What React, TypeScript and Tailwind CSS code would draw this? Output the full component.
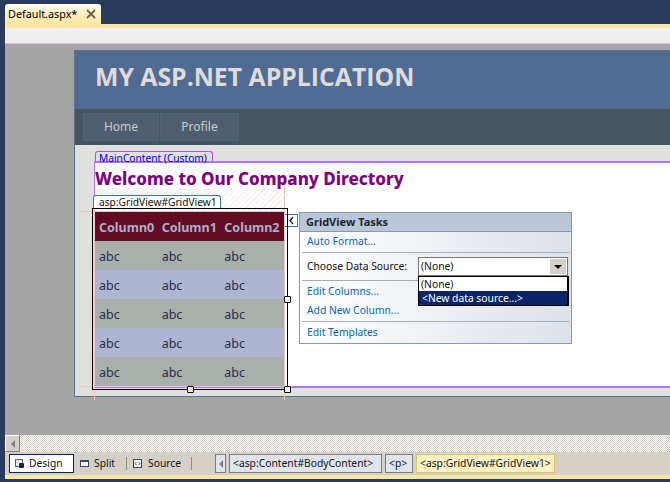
import React from "react";

const rows = [0, 1, 2, 3, 4];
const ui = "font-['Noto_Sans','DejaVu_Sans',sans-serif]";

function Handle({ cls }: { cls: string }) {
  return <div className={`absolute w-[7px] h-[7px] bg-white border border-black rounded-[1px] ${cls}`} />;
}

function GridTable() {
  return (
    <div className="w-[189px] font-['Noto_Sans',sans-serif]">
      <div className="h-[29px] bg-[#620c24] text-[#adaecb] text-[12.5px] font-bold flex items-center pl-[4px] pt-[3px]">
        <span className="w-[63px]">Column0</span>
        <span className="w-[63px]">Column1</span>
        <span className="w-[60px]">Column2</span>
      </div>
      {rows.map((r) => (
        <div
          key={r}
          className={`h-[29px] flex items-center pl-[4px] pt-[4px] text-[12.5px] text-[#2b2c4c] ${r % 2 === 0 ? "bg-[#a9b0ac]" : "bg-[#adb5d0]"}`}
        >
          <span className="w-[63px]">abc</span>
          <span className="w-[63px]">abc</span>
          <span className="w-[60px]">abc</span>
        </div>
      ))}
    </div>
  );
}

function TasksPanel() {
  return (
    <div className="absolute left-[204px] top-0 w-[273px] h-[132px] border border-[#8c97a8] bg-gradient-to-r from-[#ffffff] to-[#dde1e9] text-[10.3px] font-['Noto_Sans',sans-serif]">
      <div className="h-[19px] bg-[#b9c7d9] border-b border-[#8c97a8] pl-[6px] font-bold text-[#1c2433] text-[11px] flex items-center">
        GridView Tasks
      </div>
      <div className="mx-[2px] px-[5px] h-[21px] flex items-center text-[#0066cc] border-b border-[#a5acb8]">Auto Format...</div>
      <div className="mx-[2px] pl-[5px] h-[28px] flex items-center text-[#111] border-b border-[#a5acb8]">
        <span className="w-[111px] shrink-0">Choose Data Source:</span>
        <div className="w-[150px] shrink-0 h-[19px] bg-white border border-[#777] flex items-center justify-between pl-[2px] pr-[1px] text-[#111]">
          <span>(None)</span>
          <div className="w-[16px] h-[15px] bg-[#d4d0c8] flex items-center justify-center">
            <div className="w-0 h-0 border-x-[4px] border-x-transparent border-t-[4px] border-t-black" />
          </div>
        </div>
      </div>
      <div className="mx-[2px] px-[5px] h-[20px] pt-[2px] flex items-center text-[#0066cc]">Edit Columns...</div>
      <div className="mx-[2px] px-[5px] h-[21px] flex items-center text-[#0066cc] border-b border-[#a5acb8]">Add New Column...</div>
      <div className="mx-[2px] px-[5px] h-[21px] flex items-center text-[#0066cc]">Edit Templates</div>
      <div className="absolute left-[118px] top-[63px] w-[151px] h-[30px] bg-white border border-black border-r-2 border-b-2 leading-[13px] text-[#111]">
        <div className="h-[14px] pl-[2px] pt-[1px] flex items-center">(None)</div>
        <div className="h-[14px] pl-[3px] flex items-center bg-[#0a246a] text-white">&lt;New data source...&gt;</div>
      </div>
    </div>
  );
}

function MainContent() {
  return (
    <div className="pl-[19px] pt-[6px] w-[595px]">
      <div className="relative z-10 ml-[1px] w-[118px] h-[10px] border border-b-0 border-[#a855f7] rounded-t-[3px] text-[#0000ee] text-[10.2px] leading-[12px] pl-[3px] whitespace-nowrap font-['Noto_Sans',sans-serif]">
        MainContent (Custom)
      </div>
      <div className="relative h-[227px] bg-white border-t-2 border-b-2 border-l border-[#b277f0]">
        <div className="h-[25px] pt-[6px] text-[#800080] font-extrabold text-[17px] leading-[20px] whitespace-nowrap font-['Noto_Sans',sans-serif]">
          Welcome to Our Company Directory
        </div>
        <div className="w-[189px] h-[24px] bg-[repeating-linear-gradient(135deg,#f8ecec_0_1px,#ffffff_1px_4px)]" />
        <div className="relative w-[189px]">
          <GridTable />
          <TasksPanel />
          <div className="absolute left-[189px] top-[2px] w-[14px] h-[13px] bg-white border border-[#3a6fc4] flex items-center justify-center">
            <svg width="7" height="9" viewBox="0 0 7 9"><path d="M5 1 L2 4.5 L5 8" fill="none" stroke="#1c2433" strokeWidth="1.4" /></svg>
          </div>
        </div>
        {/* design-time guide lines */}
        <div className="absolute left-[-14px] top-[48px] w-[203px] h-px bg-[#e8c4c4]" />
        <div className="absolute left-[-14px] top-[223px] w-[203px] h-px bg-[#e8c4c4]" />
        <div className="absolute left-[189px] top-[24px] w-px h-[213px] bg-[#e8c4c4]" />
        <div className="absolute left-[-1px] top-[45px] w-px h-[192px] bg-[#e8c4c4]" />
        {/* selection frame and its tag lie over the grid */}
        <div className="absolute left-[-3px] top-[45px] w-[196px] h-[182px] border border-black pointer-events-none">
          <Handle cls="left-[94px] top-[177px]" />
          <Handle cls="left-[191px] top-[87px]" />
          <Handle cls="left-[191px] top-[177px]" />
        </div>
        <div className="absolute left-[-2px] top-[32px] w-[128px] h-[13px] bg-white border border-b-0 border-[#3a6fc4] rounded-t-[3px] text-[#111] text-[10.2px] leading-[12px] pl-[5px] whitespace-nowrap font-['Noto_Sans',sans-serif]">
          asp:GridView#GridView1
        </div>
      </div>
    </div>
  );
}

function Crumb({ children, w, active }: { children: React.ReactNode; w: string; active?: boolean }) {
  return (
    <div
      className={`${w} h-[19px] flex items-center pl-[3px] text-[10.3px] whitespace-nowrap border ${
        active ? "bg-[#fff1c4] border-[#e5c365] text-[#111]" : "bg-[#e1e4ec] border-[#7d7d7d] text-[#111]"
      }`}
    >
      {children}
    </div>
  );
}

export default function App() {
  return (
    <div className={`w-[670px] h-[482px] overflow-hidden flex flex-col pl-[5px] pb-[3px] bg-[#2a3b5e] ${ui}`}>
      {/* document tab */}
      <div className="h-[24px] pt-[4px] flex-none">
        <div className="w-[96px] h-[20px] rounded-t-[3px] bg-gradient-to-b from-[#fffdf5] via-[#ffefc0] to-[#ffe7a2] flex items-center justify-between pl-[3px] pr-[5px] text-[10.8px] text-black whitespace-nowrap">
          <span>Default.aspx*</span>
          <svg width="10" height="10" viewBox="0 0 10 10"><path d="M1 1 L9 9 M9 1 L1 9" stroke="#6e6248" strokeWidth="1.8" /></svg>
        </div>
      </div>
      <div className="h-[4px] flex-none bg-[#ffe7a2]" />
      <div className="h-[16px] flex-none bg-[#eeeeee] border-b border-[#e6b8ea]" />

      {/* design surface */}
      <div className="h-[391px] flex-none bg-[#a5a5a5] pl-[69px] pt-[6px] overflow-hidden">
        <div className="w-[596px] h-[347px] border-l border-t border-b border-[#5e7087] bg-[#e0e0de]">
          <div className="h-[58px] bg-[#526b93] pl-[20px] pt-[8px] text-[24.8px] leading-[34px] font-bold text-[#dcdcdc] whitespace-nowrap font-['Open_Sans',sans-serif]">
            MY ASP.NET APPLICATION
          </div>
          <div className="h-[36px] bg-[#445664] pl-[8px] pt-[4px] flex gap-px text-[12px] text-[#c8ccd0]">
            <div className="w-[76px] h-[28px] bg-[#4c5e6f] border border-[#506478] flex items-center justify-center">Home</div>
            <div className="w-[79px] h-[28px] bg-[#4c5e6f] border border-[#506478] flex items-center justify-center">Profile</div>
          </div>
          <MainContent />
        </div>
      </div>

      {/* horizontal scroll */}
      <div className="h-[17px] flex-none bg-[repeating-conic-gradient(#ffffff_0_25%,#d4d0c8_0_50%)] bg-[length:2px_2px]">
        <div className="w-[15px] h-[17px] bg-[#d4d0c8] border-r border-b border-[#808080] border-l border-t border-l-white border-t-white flex items-center justify-center">
          <div className="w-0 h-0 border-y-[4px] border-y-transparent border-r-[4px] border-r-[#808080]" />
        </div>
      </div>

      {/* view bar */}
      <div className="h-[23px] flex-none bg-[#d4d0c8] flex items-center text-[10.3px] text-[#111]">
        <div className="ml-[4px] w-[65px] h-[19px] bg-white border border-[#0a246a] flex items-center pl-[5px] gap-[5px]">
          <svg width="9" height="9" viewBox="0 0 9 9">
            <rect x="0.5" y="0.5" width="7" height="7" fill="#e6ecf5" stroke="#4d6185" />
            <rect x="4" y="4" width="5" height="5" rx="1" fill="#222" />
          </svg>
          <span>Design</span>
        </div>
        <svg className="ml-[6px]" width="10" height="8" viewBox="0 0 10 8">
          <rect x="0.5" y="0.5" width="8" height="6" fill="#fff" stroke="#354a70" />
          <rect x="0" y="0" width="9" height="2" fill="#354a70" />
        </svg>
        <span className="ml-[4px] w-[32px]">Split</span>
        <div className="w-px h-[13px] bg-[#8d8d86]" />
        <svg className="ml-[6px]" width="9" height="9" viewBox="0 0 9 9">
          <rect x="0.5" y="0.5" width="8" height="8" fill="#fff" stroke="#354a70" />
          <path d="M3.5 3 L2 4.5 L3.5 6 M5.5 3 L7 4.5 L5.5 6" fill="none" stroke="#354a70" />
        </svg>
        <span className="ml-[6px] w-[43px]">Source</span>
        <div className="w-px h-[13px] bg-[#8d8d86]" />
        <div className="ml-[23px] w-[11px] h-[19px] bg-[#e1e4ec] border border-[#7d7d7d] flex items-center justify-center">
          <div className="w-0 h-0 border-y-[4px] border-y-transparent border-r-[4px] border-r-[#808080]" />
        </div>
        <div className="ml-[3px] flex gap-[3px]">
          <Crumb w="w-[153px]">&lt;asp:Content#BodyContent&gt;</Crumb>
          <Crumb w="w-[28px]">&lt;p&gt;</Crumb>
          <Crumb w="w-[139px]" active>&lt;asp:GridView#GridView1&gt;</Crumb>
        </div>
      </div>
      <div className="h-[4px] flex-none bg-[#ffe7a2]" />
    </div>
  );
}
